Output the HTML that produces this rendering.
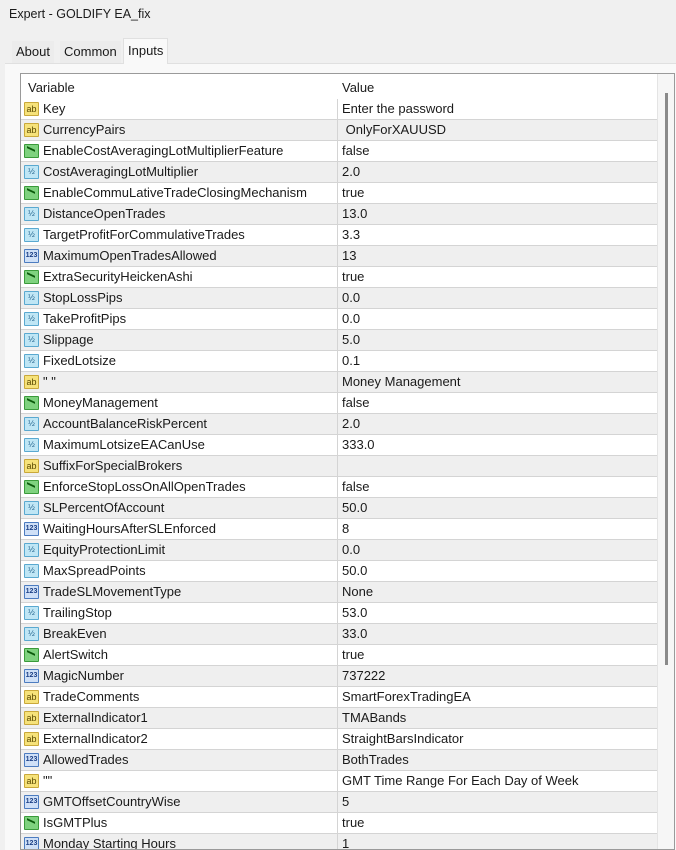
<!DOCTYPE html>
<html><head><meta charset="utf-8"><style>
*{margin:0;padding:0;box-sizing:border-box}
body{width:676px;height:850px;background:#f0f0f0;font-family:"Liberation Sans",sans-serif;font-size:13px;color:#1a1a1a;position:relative;overflow:hidden}
.title{position:absolute;left:9px;top:7px;font-size:12.5px}
.tab{position:absolute;top:41px;height:22px;line-height:21px;font-size:13px;padding:0 4px;background:#ececec}
.tabsel{background:#f9f9f9;top:38px;height:26px;line-height:24px;border:1px solid #e0e0e0;border-bottom:none}
.panel{position:absolute;left:5px;top:63px;width:671px;height:787px;background:#f9f9f9;border-top:1px solid #e0e0e0}
.table{position:absolute;left:20px;top:73px;width:655px;height:777px;border:1px solid #9a9a9a;background:#fff;overflow:hidden}
.hdr{position:absolute;left:0;top:0;height:25px;width:636px;line-height:25px;background:#fff}
.hdr span{position:absolute;top:1px}
.row{position:absolute;left:0;width:636px;height:21px;line-height:20px;border-bottom:1px solid #d4d4d4;white-space:pre}
.row.g{background:#efefef}
.row .n{position:absolute;left:22px}
.row .v{position:absolute;left:321px}
.row .d{position:absolute;left:316px;top:0;width:1px;height:21px;background:#d4d4d4}
.ic{position:absolute;left:3px;top:3px;width:15px;height:14px;font-size:8px;line-height:12px;text-align:center;border:1px solid;border-radius:1px}
.ab{background:#f6e27a;border-color:#c9a83a;color:#5a4a00;font-size:9px}
.hf{background:#bfe6f5;border-color:#5aa9d0;color:#1d5f8a}
.nm{background:#cfe0f7;border-color:#4c7cc0;color:#1b3f86;font-size:7px;font-weight:bold}
.bl{background:#7fd27f;border-color:#3a9a3a}
.bl:after{content:"";position:absolute;left:2px;top:3px;width:8px;height:5px;border-top:2px solid #0b5a0b;transform:skewY(25deg)}
.sb{position:absolute;left:636px;top:0;width:17px;height:780px;background:#f6f6f6;border-left:1px solid #e4e4e4}
.th{position:absolute;left:7px;top:19px;width:3px;height:572px;background:#8a8a8a}
</style></head><body>
<div class="title">Expert - GOLDIFY EA_fix</div>
<div class="panel"></div>
<div class="tab" style="left:12px">About</div>
<div class="tab" style="left:60px">Common</div>
<div class="tab tabsel" style="left:123px">Inputs</div>
<div class="table">
<div class="hdr"><span style="left:7px">Variable</span><span style="left:321px">Value</span></div>
<div id="rows"></div>
<div class="sb"><div class="th"></div></div>
</div>
<script>
var R=[["ab","Key","Enter the password"],["ab","CurrencyPairs"," OnlyForXAUUSD"],["bl","EnableCostAveragingLotMultiplierFeature","false"],["hf","CostAveragingLotMultiplier","2.0"],["bl","EnableCommuLativeTradeClosingMechanism","true"],["hf","DistanceOpenTrades","13.0"],["hf","TargetProfitForCommulativeTrades","3.3"],["nm","MaximumOpenTradesAllowed","13"],["bl","ExtraSecurityHeickenAshi","true"],["hf","StopLossPips","0.0"],["hf","TakeProfitPips","0.0"],["hf","Slippage","5.0"],["hf","FixedLotsize","0.1"],["ab","\" \"","Money Management"],["bl","MoneyManagement","false"],["hf","AccountBalanceRiskPercent","2.0"],["hf","MaximumLotsizeEACanUse","333.0"],["ab","SuffixForSpecialBrokers",""],["bl","EnforceStopLossOnAllOpenTrades","false"],["hf","SLPercentOfAccount","50.0"],["nm","WaitingHoursAfterSLEnforced","8"],["hf","EquityProtectionLimit","0.0"],["hf","MaxSpreadPoints","50.0"],["nm","TradeSLMovementType","None"],["hf","TrailingStop","53.0"],["hf","BreakEven","33.0"],["bl","AlertSwitch","true"],["nm","MagicNumber","737222"],["ab","TradeComments","SmartForexTradingEA"],["ab","ExternalIndicator1","TMABands"],["ab","ExternalIndicator2","StraightBarsIndicator"],["nm","AllowedTrades","BothTrades"],["ab","\"\"","GMT Time Range For Each Day of Week"],["nm","GMTOffsetCountryWise","5"],["bl","IsGMTPlus","true"],["nm","Monday_Starting_Hours","1"]];
var T={ab:"ab",hf:"½",nm:"123",bl:""};var h="";
R.forEach(function(r,i){h+='<div class="row'+(i%2?' g':'')+'" style="top:'+(25+i*21)+'px"><span class="ic '+r[0]+'">'+T[r[0]]+'</span><span class="n">'+r[1].replace(/_/g,' ')+'</span><span class="d"></span><span class="v">'+r[2]+'</span></div>'});
document.getElementById("rows").innerHTML=h;
</script>
</body></html>
